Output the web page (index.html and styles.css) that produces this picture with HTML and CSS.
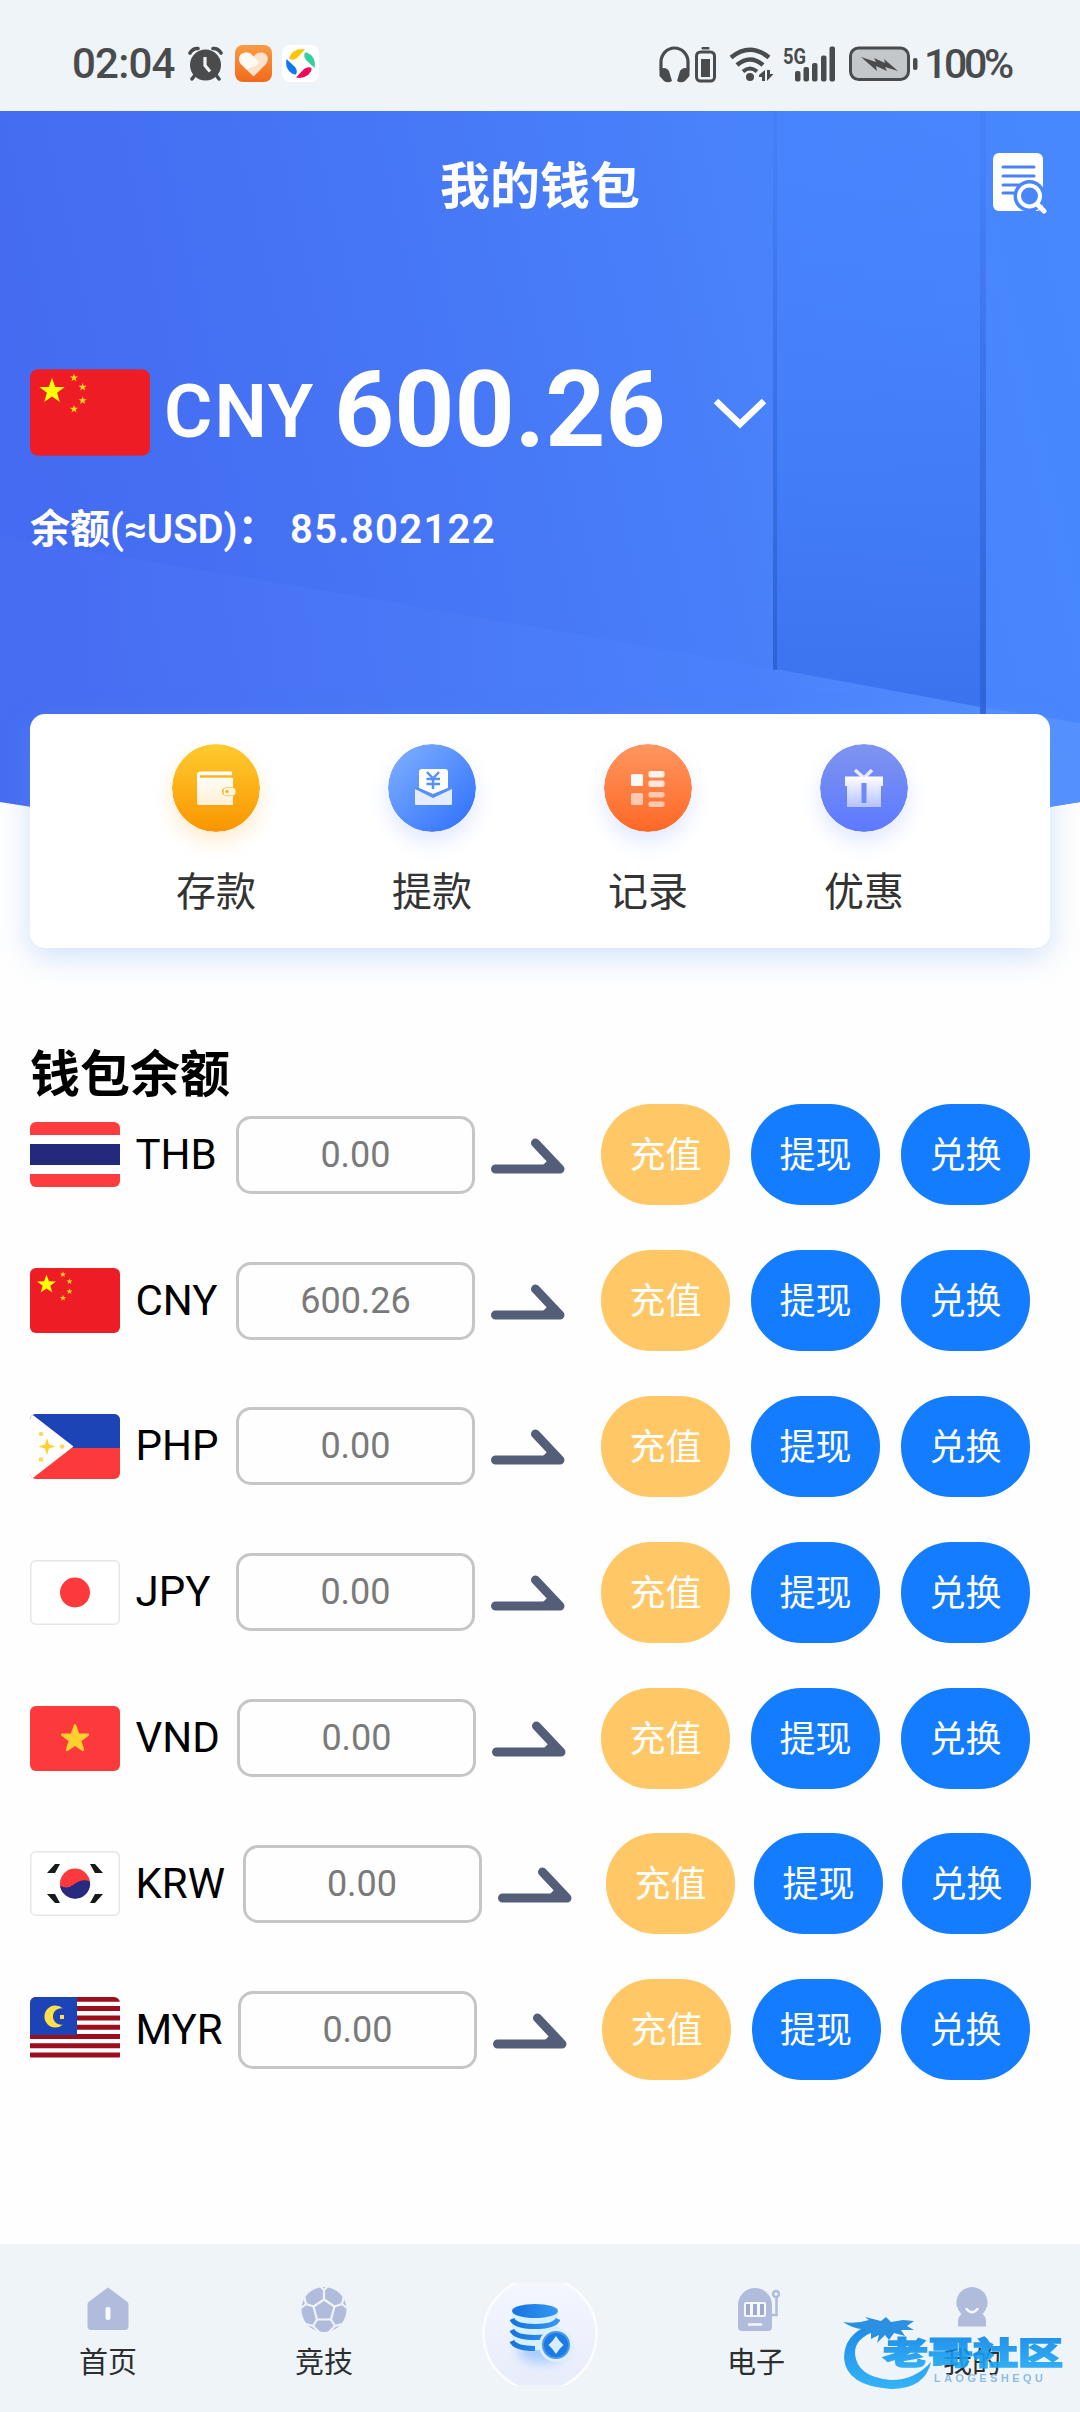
FILE: index.html
```html
<!DOCTYPE html>
<html lang="zh-CN">
<head>
<meta charset="utf-8">
<title>我的钱包</title>
<link rel="stylesheet" href="styles.css">
</head>
<body>
<svg class="defs" width="0" height="0" aria-hidden="true">
  <defs>
    <clipPath id="flag-clip"><rect width="90" height="65" rx="6"/></clipPath>
    <path id="star" d="M0-10 2.4-3.2 9.5-3.1 3.8 1.2 5.9 8.1 0 4-5.9 8.1-3.8 1.2-9.5-3.1-2.4-3.2Z"/>
    <symbol id="arrow" viewBox="0 0 74 36">
      <path d="M4.500 31H69L44.500 5" fill="none" stroke="#555e78" stroke-width="9" stroke-linecap="round" stroke-linejoin="round"/>
      <path d="M50 29 58 21 67 31Z" fill="#555e78"/>
    </symbol>
    <symbol id="flag-cn" viewBox="0 0 90 65">
      <g clip-path="url(#flag-clip)">
        <rect width="90" height="65" fill="#ee1c25"/>
        <g fill="#ffff00"><use href="#star" transform="translate(16.500 16.500)"/></g>
        <g fill="#ffd91c">
          <use href="#star" transform="translate(33 6.500) scale(.32)"/>
          <use href="#star" transform="translate(39.500 13.500) scale(.32)"/>
          <use href="#star" transform="translate(39.500 23.500) scale(.32)"/>
          <use href="#star" transform="translate(33 30) scale(.32)"/>
        </g>
      </g>
    </symbol>
  </defs>
</svg>
<div class="page">
  <header class="status">
    <div class="status-left">
      <span class="clock">02:04</span>
      <svg class="alarm" viewBox="0 0 35 35" width="35" height="35">
        <g fill="#494b4d"><circle cx="17.500" cy="19" r="15.500"/><path d="M1 9A9 9 0 0 1 11 1L1 9ZM34 9A9 9 0 0 0 24 1Z"/></g>
        <path d="M2 7Q5 2 10 2.500M33 7Q30 2 25 2.500M7 29 4 33M28 29 31 33" stroke="#494b4d" stroke-width="3.500" stroke-linecap="round" fill="none"/>
        <path d="M17 11V19.500L22 25.500" stroke="#eff4f8" stroke-width="3.200" fill="none"/>
      </svg>
      <svg class="heart" viewBox="0 0 37 37" width="37" height="37">
        <defs><linearGradient id="og" x2="0" y2="1"><stop stop-color="#f99b42"/><stop offset="1" stop-color="#f26a1c"/></linearGradient></defs>
        <rect width="37" height="37" rx="8" fill="url(#og)"/>
        <path d="M18.500 31.500 6 19C1.500 13 6 7.500 11 7.500 15 7.500 17 9.500 18.500 12 20 9.500 22 7.500 26 7.500 32 7.500 35 13 31 19Z" fill="#fde2cb"/>
        <path d="M6 19C1.500 13 6 7.500 11 7.500 17 7.500 18 12 24 17 22 22 16 21 12 25Z" fill="#fffaf3"/>
      </svg>
      <svg class="pinwheel" viewBox="0 0 37 37" width="37" height="37">
        <rect width="37" height="37" rx="8" fill="#fff"/>
        <path d="M7.500 14Q7 11 11 7 16 3 23 4.500L15 13Q11 16 7.500 14Z" fill="#fbc600"/>
        <path d="M23 7.500Q26 7 30 11 34 16 32.500 23L24 15Q21 11 23 7.500Z" fill="#37cfa1"/>
        <path d="M29.500 23Q30 26 26 30 21 34 14 32.500L22 24Q26 21 29.500 23Z" fill="#f3085c"/>
        <path d="M14 29.500Q11 30 7 26 3 21 4.500 14L13 22Q16 26 14 29.500Z" fill="#1177ee"/>
      </svg>
    </div>
    <div class="status-right">
      <svg viewBox="0 0 356 40" width="356" height="40">
        <g fill="none" stroke="#494b4d">
          <path d="M3 26V18A13.500 14 0 0 1 30 18V26" stroke-width="3.200"/>
          <rect x="38.500" y="8" width="18" height="29" rx="4" stroke-width="3"/>
          <path d="M73 13.500Q92 -2 111 13.500" stroke-width="4.500"/>
          <path d="M79 21Q92 10 105 21" stroke-width="4.500"/>
          <path d="M85 27.500Q92 21.500 99 27.500" stroke-width="4"/>
        </g>
        <g fill="#494b4d">
          <path d="M1.500 25Q8 22 11 27L14 37Q10 39.500 6 37L1.500 32ZM31.500 25Q25 22 22 27L19 37Q23 39.500 27 37L31.500 32Z"/>
          <rect x="43.500" y="3" width="8" height="2.500" rx="1"/><rect x="43" y="15" width="9" height="18"/>
          <circle cx="92" cy="33" r="4"/>
          <path d="M107 26V37H104V33H101V31ZM109 26V37L115.500 30H112V26Z"/>
          <rect x="137" y="27" width="5.500" height="10.500" rx="2"/><rect x="145.500" y="23" width="5.500" height="14.500" rx="2"/><rect x="154" y="19" width="5.500" height="18.500" rx="2"/><rect x="163" y="11.500" width="5.500" height="26" rx="2"/><rect x="171.500" y="2.500" width="5.500" height="35" rx="2"/>
          <rect x="255" y="14" width="4.500" height="12" rx="2"/>
        </g>
        <rect x="192.500" y="4" width="58" height="31.500" rx="8" fill="#c3c7ca" stroke="#494b4d" stroke-width="3"/>
        <path d="M203 13 218 18 216 14 227 19 226 15 240 27 227 23 229 27 218 22 219 27Z" fill="#494b4d"/>
        <text x="125" y="19.500" class="net" textLength="23" lengthAdjust="spacingAndGlyphs">5G</text>
      </svg>
      <span class="percent">100%</span>
    </div>
  </header>

  <section class="hero">
    <svg class="hero-bg" viewBox="0 0 1080 740" width="1080" height="740">
      <defs>
        <linearGradient id="bg" x1="0" y1=".35" x2="1" y2=".2"><stop stop-color="#446bf1"/><stop offset=".35" stop-color="#4675f5"/><stop offset=".72" stop-color="#4983fb"/><stop offset="1" stop-color="#4788fe"/></linearGradient>
        <linearGradient id="panel" x2="0" y2="1"><stop stop-color="#4685ff" stop-opacity=".3"/><stop offset=".45" stop-color="#447ff9" stop-opacity=".8"/><stop offset="1" stop-color="#3b73ee"/></linearGradient>
        <linearGradient id="edge" x2="0" y2="1"><stop stop-color="#3a6fe8" stop-opacity=".2"/><stop offset=".4" stop-color="#3768df" stop-opacity=".6"/><stop offset="1" stop-color="#2e63d6"/></linearGradient>
        <linearGradient id="floor"><stop stop-color="#5074f5" stop-opacity=".2"/><stop offset=".7" stop-color="#4b82fc" stop-opacity=".7"/><stop offset="1" stop-color="#5592ff"/></linearGradient>
        <clipPath id="curve"><path d="M0 0H1080V691Q540 781 0 691Z"/></clipPath>
      </defs>
      <g clip-path="url(#curve)">
        <rect width="1080" height="740" fill="url(#bg)"/>
        <path d="M0 424 138 449 344 483 775 558 980 596 1080 612V740H0Z" fill="url(#floor)"/>
        <path d="M776 0H981V596L776 558Z" fill="url(#panel)"/>
        <rect x="773" width="4" height="559" fill="url(#edge)"/>
        <rect x="980" width="6" height="620" fill="url(#edge)"/>
      </g>
    </svg>
    <div class="title-bar">
      <h1>我的钱包</h1>
      <svg class="doc" viewBox="0 0 56 62" width="56" height="62">
        <rect x="1" y="1" width="50" height="58" rx="6" fill="#fff"/>
        <g stroke="#4a83f8" stroke-width="3" stroke-linecap="round"><path d="M11 15H42M11 24H42M11 33H29M11 41H22"/></g>
        <circle cx="37.500" cy="44" r="16" fill="#4a86fb"/><circle cx="37.500" cy="44" r="10.500" fill="#4a86fb" stroke="#fff" stroke-width="4"/>
        <path d="M45 52 52 59" stroke="#fff" stroke-width="5" stroke-linecap="round"/>
      </svg>
    </div>
    <div class="balance">
      <svg class="flag-big" width="120" height="87" preserveAspectRatio="none"><use href="#flag-cn"/></svg>
      <span class="code">CNY</span>
      <span class="amount">600.26</span>
      <svg class="chevron" viewBox="0 0 54 34" width="54" height="34"><path d="M3 4 27 27 51 4" fill="none" stroke="#fff" stroke-width="6.500"/></svg>
    </div>
    <p class="usd"><span class="usd-label">余额(≈USD)：</span><span class="usd-value">85.802122</span></p>
  </section>

  <section class="card">
    <div class="action">
      <svg class="disc disc-gold" viewBox="0 0 88 88" width="88" height="88">
        <defs><linearGradient id="g1" x2="0" y2="1"><stop stop-color="#ffcb30"/><stop offset="1" stop-color="#f99500"/></linearGradient><linearGradient id="w1" x2="0" y2="1"><stop stop-color="#fff"/><stop offset="1" stop-color="#fff0d6"/></linearGradient></defs>
        <circle cx="44" cy="44" r="44" fill="url(#g1)"/>
        <path d="M28 27.500H60V34H61V43.500H54Q50 44 50 47.500T54 52H61V61H27Q25 61 25 59V31Q25 28 28 27.500Z" fill="url(#w1)"/>
        <path d="M28 32.500H60" stroke="#fdb41f" stroke-width="2.500"/><rect x="51.500" y="44" width="12" height="7.500" rx="3" fill="#fff5dd"/><circle cx="55" cy="47.500" r="1.500" fill="#fba90f"/>
      </svg>
      <span>存款</span>
    </div>
    <div class="action">
      <svg class="disc disc-blue" viewBox="0 0 88 88" width="88" height="88">
        <defs><linearGradient id="g2" x2="1" y2="1"><stop offset=".1" stop-color="#7aabff"/><stop offset=".9" stop-color="#3475fb"/></linearGradient></defs>
        <circle cx="44" cy="44" r="44" fill="url(#g2)"/>
        <path d="M34 25H57Q60 25 60 28V44L45 50 31 44V28Q31 25 34 25Z" fill="#fff"/>
        <path d="M27 45 45 54 64 45V60Q64 61 63 61H28Q27 61 27 60Z" fill="#e3edff"/><path d="M27 43.500 45 51.500 64 43.500" fill="none" stroke="#578ffa" stroke-width="2"/>
        <path d="M39 28 45 34.500 51 28M38.500 35H52M38.500 40H52M45 35V45" stroke="#578ffa" stroke-width="2.500" fill="none"/>
      </svg>
      <span>提款</span>
    </div>
    <div class="action">
      <svg class="disc disc-orange" viewBox="0 0 88 88" width="88" height="88">
        <defs><linearGradient id="g3" x2="0" y2="1"><stop stop-color="#ff965f"/><stop offset="1" stop-color="#ff6826"/></linearGradient></defs>
        <circle cx="44" cy="44" r="44" fill="url(#g3)"/>
        <g fill="#fff"><rect x="27" y="30" width="12" height="12" rx="1.500" opacity=".95"/><rect x="44.500" y="27" width="16" height="6.500" rx="2" opacity=".9"/><rect x="44.500" y="36.500" width="16" height="6.500" rx="2" opacity=".8"/><rect x="27" y="49" width="12" height="12" rx="1.500" opacity=".6"/><rect x="44.500" y="48" width="16" height="5.500" rx="2" opacity=".6"/><rect x="44.500" y="57.500" width="16" height="5.500" rx="2" opacity=".6"/></g>
      </svg>
      <span>记录</span>
    </div>
    <div class="action">
      <svg class="disc disc-violet" viewBox="0 0 88 88" width="88" height="88">
        <defs><linearGradient id="g4" x2="0" y2="1"><stop stop-color="#7f94ef"/><stop offset="1" stop-color="#5d79ff"/></linearGradient><linearGradient id="w4" x2="0" y2="1"><stop stop-color="#fff"/><stop offset="1" stop-color="#b4c2ff"/></linearGradient></defs>
        <circle cx="44" cy="44" r="44" fill="url(#g4)"/>
        <path d="M35 26 43 33M52 26 45 33" stroke="#e6eaff" stroke-width="3.500"/>
        <path d="M25 32.500H63V42H61V63H27V42H25Z" fill="url(#w4)"/><path d="M44 39V59" stroke="#7088f8" stroke-width="5"/>
      </svg>
      <span>优惠</span>
    </div>
  </section>

  <main class="wallets">
    <h2>钱包余额</h2>
    <div class="row">
      <svg class="flag" viewBox="0 0 90 65"><g clip-path="url(#flag-clip)"><rect width="90" height="65" fill="#fc3c3e"/><rect y="13" width="90" height="39" fill="#fff"/><rect y="22" width="90" height="21" fill="#232a7c"/></g></svg>
      <span class="cur">THB</span><div class="field">0.00</div><svg class="arrow"><use href="#arrow"/></svg>
      <div class="buttons"><button class="btn gold">充值</button><button class="btn">提现</button><button class="btn">兑换</button></div>
    </div>
    <div class="row">
      <svg class="flag"><use href="#flag-cn"/></svg>
      <span class="cur">CNY</span><div class="field">600.26</div><svg class="arrow"><use href="#arrow"/></svg>
      <div class="buttons"><button class="btn gold">充值</button><button class="btn">提现</button><button class="btn">兑换</button></div>
    </div>
    <div class="row">
      <svg class="flag" viewBox="0 0 90 65"><g clip-path="url(#flag-clip)"><rect width="90" height="65" fill="#fc3a3b"/><rect width="90" height="34" fill="#1c44b7"/><path d="M-1-2 43.500 32.500-1 67Z" fill="#fff"/></g><path d="M17 24 19 30.500 25.500 32.500 19 34.500 17 41 15 34.500 8.500 32.500 15 30.500Z" fill="#ffd02e"/><g fill="#fcd85a"><circle cx="11" cy="20" r="2.300"/><circle cx="32" cy="32.500" r="2.300"/><circle cx="11" cy="45.500" r="2.300"/></g></svg>
      <span class="cur">PHP</span><div class="field">0.00</div><svg class="arrow"><use href="#arrow"/></svg>
      <div class="buttons"><button class="btn gold">充值</button><button class="btn">提现</button><button class="btn">兑换</button></div>
    </div>
    <div class="row">
      <svg class="flag" viewBox="0 0 90 65"><rect x=".75" y=".75" width="88.500" height="63.500" rx="5" fill="#fff" stroke="#e6e6e6" stroke-width="1.500"/><circle cx="45" cy="32.500" r="15" fill="#fc3a3b"/></svg>
      <span class="cur">JPY</span><div class="field">0.00</div><svg class="arrow"><use href="#arrow"/></svg>
      <div class="buttons"><button class="btn gold">充值</button><button class="btn">提现</button><button class="btn">兑换</button></div>
    </div>
    <div class="row row-vnd">
      <svg class="flag" viewBox="0 0 90 65"><rect width="90" height="65" rx="6" fill="#fc3a3b"/><use href="#star" transform="translate(45 33) scale(1.350)" fill="#ffd02e" stroke="#ffd02e" stroke-width="1.800" stroke-linejoin="round"/></svg>
      <span class="cur">VND</span><div class="field">0.00</div><svg class="arrow"><use href="#arrow"/></svg>
      <div class="buttons"><button class="btn gold">充值</button><button class="btn">提现</button><button class="btn">兑换</button></div>
    </div>
    <div class="row row-krw">
      <svg class="flag" viewBox="0 0 90 65"><rect x=".75" y=".75" width="88.500" height="63.500" rx="5" fill="#fff" stroke="#e6e6e6" stroke-width="1.500"/><circle cx="45" cy="32.500" r="15" fill="#fc3a3b"/><path d="M30 34.500Q37 39 44.500 33T60 30.500A15 15 0 1 1 30 34.500Z" fill="#262a80"/><path d="M25 13H30L25 22H17ZM65 13H60L65 22H73ZM25 52H30L25 43H17ZM65 52H60L65 43H73Z" fill="#161a18"/></svg>
      <span class="cur">KRW</span><div class="field">0.00</div><svg class="arrow"><use href="#arrow"/></svg>
      <div class="buttons"><button class="btn gold">充值</button><button class="btn">提现</button><button class="btn">兑换</button></div>
    </div>
    <div class="row row-myr">
      <svg class="flag" viewBox="0 0 90 65"><g clip-path="url(#flag-clip)"><rect width="90" height="65" fill="#fff"/><path d="M0 2.300H90M0 11.600H90M0 20.900H90M0 30.200H90M0 39.500H90M0 48.800H90M0 58.100H90" stroke="#9c0e1b" stroke-width="5"/><rect width="47" height="38" fill="#1c44b7"/><path d="M33 11.500A11 11 0 1 0 33 27.500 8.200 8.200 0 1 1 33 11.500Z" fill="#ffe04a"/><rect x="30" y="18" width="4" height="4" fill="#ffe04a"/></g></svg>
      <span class="cur">MYR</span><div class="field">0.00</div><svg class="arrow"><use href="#arrow"/></svg>
      <div class="buttons"><button class="btn gold">充值</button><button class="btn">提现</button><button class="btn">兑换</button></div>
    </div>
  </main>

  <nav class="tabs">
    <div class="tab">
      <svg viewBox="0 0 48 48" width="48" height="48"><path d="M24 3.500 43.500 18Q44.500 19 44.500 20.500V42Q44.500 46 40.500 46H7.500Q3.500 46 3.500 42V20.500Q3.500 19 4.500 18Z" fill="#b1bbdc"/><rect x="21.500" y="23" width="5" height="13" rx="2" fill="#f8fbff"/></svg>
      <span>首页</span>
    </div>
    <div class="tab">
      <svg viewBox="0 0 48 48" width="48" height="48"><circle cx="24" cy="25.500" r="22.500" fill="#b1bbdc"/><g fill="none" stroke="#eff4f8" stroke-width="2.200"><path d="M24 15.500 34.500 22.500 31 35.500H17L13.500 22.500Z"/><path d="M24 15.500V6M34.500 22.500 42 20M31 35.500 35 42M17 35.500 13 42M13.500 22.500 6 20M24 6 20 2M24 6 28 2M42 20 44 12M42 20 47 24M35 42 29 48M35 42 42 40M13 42 19 48M13 42 6 40M6 20 1 24M6 20 4 12"/></g></svg>
      <span>竞技</span>
    </div>
    <div class="tab tab-center">
      <svg viewBox="0 0 116 102" width="116" height="102">
        <defs><linearGradient id="cb" x2="0" y2="1"><stop stop-color="#f5f7fe"/><stop offset="1" stop-color="#e7ecfb"/></linearGradient><linearGradient id="coin"><stop stop-color="#1674de"/><stop offset="1" stop-color="#3398f5"/></linearGradient><filter id="glow" x="-50%" y="-50%" width="200%" height="200%"><feGaussianBlur stdDeviation="6"/></filter></defs>
        <circle cx="58" cy="51" r="56.500" fill="url(#cb)" stroke="#fcfdff" stroke-width="2.500"/>
        <ellipse cx="60" cy="68" rx="24" ry="12" fill="#8dbdfc" opacity=".7" filter="url(#glow)"/>
        <path d="M30 28V60Q32 67 53 67T76 60V28Z" fill="#d5efff"/>
        <ellipse cx="53" cy="28" rx="23" ry="7" fill="url(#coin)"/>
        <g fill="none" stroke="url(#coin)" stroke-width="5"><path d="M30 36Q33 43.500 53 43.500T76 36M30 47Q33 54.500 53 54.500T76 47M30 58Q33 65.500 53 65.500"/></g>
        <circle cx="74" cy="62" r="17" fill="#dcefff"/><circle cx="74" cy="62" r="13" fill="#1a7ae6" stroke="#4e96e3" stroke-width="2"/><path d="M74 53Q77 58 81.500 62 77 66 74 71 71 66 66.500 62 71 58 74 53Z" fill="#d9edff"/>
      </svg>
    </div>
    <div class="tab">
      <svg viewBox="0 0 48 48" width="48" height="48"><path d="M6 43V21A17 17 0 0 1 40 21V43Q40 47 36 47H10Q6 47 6 43Z" fill="#b1bbdc"/><rect x="12" y="18" width="22" height="15" rx="2" fill="#f4f8fc"/><path d="M16 20V31M23 20V31M30 20V31" stroke="#9fa9cb" stroke-width="4"/><path d="M17 40.500H29" stroke="#f4f8fc" stroke-width="2.500" stroke-linecap="round"/><path d="M40 31H44.500V13" fill="none" stroke="#b1bbdc" stroke-width="2.500"/><circle cx="44" cy="10" r="3" fill="none" stroke="#b1bbdc" stroke-width="2.500"/></svg>
      <span>电子</span>
    </div>
    <div class="tab">
      <svg viewBox="0 0 48 48" width="48" height="48"><path d="M24 3A15.500 15.500 0 0 1 34.500 30Q38 33 38 37V42.500H10V37Q10 33 13.500 30A15.500 15.500 0 0 1 24 3Z" fill="#b1bbdc"/><path d="M18.500 25Q24 31.500 29.500 25" fill="none" stroke="#f4f8fc" stroke-width="2.500" stroke-linecap="round"/></svg>
      <span>我的</span>
    </div>
    <svg class="watermark" viewBox="0 0 230 90" width="230" height="90">
      <defs><linearGradient id="wm" x2="0" y2="1"><stop stop-color="#087fe5"/><stop offset="1" stop-color="#20adf7"/></linearGradient></defs>
      <path d="M28 21Q3 31 3 54 5 82 50 85 84 85 90 58 74 76 50 76 16 73 14 50 13 35 34 27Z" fill="url(#wm)"/>
      <path d="M2 18Q16 20 28 16L24 13 40 17 45 13 50 18 62 16 73 17 66 22 73 26 60 26 64 32 53 29 48 36 44 31 36 39 38 31 30 35 30 29 22 30 25 25Q14 26 2 18Z" fill="#1686df"/>
      <text class="wm-name" x="42" y="60" textLength="180" lengthAdjust="spacingAndGlyphs">老哥社区</text>
      <text class="wm-sub" x="93" y="78" textLength="109">LAOGESHEQU</text>
    </svg>
  </nav>
</div>
</body>
</html>
```
FILE: styles.css
```css
* { box-sizing: border-box; }
body {
  margin: 0;
  width: 1080px;
  height: 2412px;
  overflow: hidden;
  background: #fefefe;
  font-family: Roboto, "Noto Sans CJK SC", sans-serif;
}
svg { display: block; flex: none; }
.defs { position: absolute; }
.page { display: flex; flex-direction: column; width: 1080px; height: 2412px; }
h1, h2, p { margin: 0; }

.status {
  flex: none;
  height: 111px;
  padding: 16px 68px 0 72px;
  display: flex;
  justify-content: space-between;
  align-items: center;
  background: #eff4f8;
  color: #494b4d;
  font-weight: 500;
}
.status-left, .status-right { display: flex; align-items: center; }
.clock { width: 116px; font-size: 42px; line-height: 40px; letter-spacing: -.8px; }
.heart { margin-left: 12px; }
.pinwheel { margin-left: 10px; }
.percent { width: 88px; margin-left: -90px; font-size: 41px; line-height: 40px; letter-spacing: -3.3px; white-space: nowrap; }
.net { font: 700 22px Roboto, sans-serif; fill: #494b4d; }

.hero { position: relative; flex: none; height: 603px; color: #fff; }
.hero-bg { position: absolute; left: 0; top: 0; }
.title-bar, .balance, .usd { position: relative; }
.title-bar { height: 148px; display: flex; align-items: center; justify-content: center; }
h1 { padding-bottom: 6px; font-size: 50px; line-height: 60px; font-weight: 700; font-family: "Noto Sans CJK SC", sans-serif; }
.doc { position: absolute; right: 32px; top: 41px; }
.balance { display: flex; align-items: center; height: 110px; margin-top: 98px; padding-left: 30px; }
.code { width: 171px; padding-left: 14px; font-size: 74px; line-height: 100px; font-weight: 600; letter-spacing: 2px; }
.amount { width: 392px; padding: 0 0 2px 13px; font-size: 105px; line-height: 100px; font-weight: 700; }
.chevron { margin-top: 4px; }
.usd { display: flex; margin-top: 36px; padding-left: 30px; font-size: 40px; line-height: 54px; font-weight: 600; }
.usd-label { width: 260px; white-space: nowrap; }
.usd-value { letter-spacing: 1.3px; }

.card {
  position: relative;
  flex: none;
  display: grid;
  grid-template-columns: repeat(4, 216px);
  justify-content: center;
  height: 234px;
  margin: 0 30px;
  padding-top: 30px;
  border-radius: 15px;
  background: #fff;
  box-shadow: 0 8px 30px rgba(96, 155, 240, .3);
}
.action { display: flex; flex-direction: column; align-items: center; font-size: 40px; line-height: 60px; color: #333; }
.action span { margin-top: 31px; }
.disc { border-radius: 50%; }
.disc-gold { box-shadow: 0 10px 20px rgba(250, 160, 20, .2); }
.disc-blue, .disc-orange, .disc-violet { box-shadow: 0 10px 20px rgba(70, 120, 255, .16); }

.wallets { flex: 1; padding: 87px 50px 0 30px; }
h2 { height: 47px; font-size: 50px; line-height: 70px; font-weight: 700; color: #000; font-family: "Noto Sans CJK SC", sans-serif; }
.row { display: flex; align-items: center; height: 145.8px; }
.flag { width: 90px; height: 65px; }
.cur { flex: none; width: 100.5px; margin-left: 15.5px; font-size: 42px; line-height: 60px; color: #000; }
.row-vnd .cur { width: 101.5px; }
.row-krw .cur { width: 107px; }
.row-myr .cur { width: 102.5px; }
.field {
  flex: none;
  width: 239px;
  height: 78px;
  border: 3px solid #c6c6c6;
  border-radius: 15px;
  font-size: 36px;
  line-height: 72px;
  text-align: center;
  color: #7a7a7a;
}
.arrow { width: 74px; height: 36px; margin-left: 16px; margin-top: 2px; }
.buttons { display: flex; justify-content: space-between; width: 429px; margin-left: auto; }
.row-krw .buttons { width: 425px; margin-right: -1px; }
.row-myr .buttons { width: 428px; }
.btn {
  width: 129px;
  height: 101px;
  padding: 0 0 5px;
  border: 0;
  border-radius: 50px;
  background: #147cff;
  color: #fff;
  font: 400 36px/60px "Noto Sans CJK SC", sans-serif;
}
.gold { background: #ffc766; }

.tabs { position: relative; flex: none; display: grid; grid-template-columns: repeat(5, 216px); height: 168px; background: #eff4f8; }
.tab { display: flex; flex-direction: column; align-items: center; padding-top: 40px; font-size: 29px; line-height: 40px; color: #2c2e30; }
.tab span { margin-top: 11px; }
.tab-center { padding-top: 39px; }
.watermark { position: absolute; left: 841px; top: 60px; opacity: .9; }
.wm-name { font: 900 31px "Noto Sans CJK SC", sans-serif; fill: url(#wm); stroke: url(#wm); stroke-width: 1.5px; }
.wm-sub { font: 700 11px "Liberation Sans", sans-serif; fill: #7fb7e6; }
```
